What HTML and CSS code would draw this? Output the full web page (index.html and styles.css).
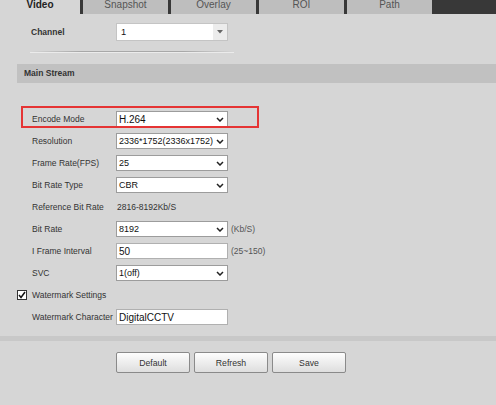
FILE: index.html
```html
<!DOCTYPE html>
<html>
<head>
<meta charset="utf-8">
<link rel="stylesheet" href="styles.css">
</head>
<body>
<div class="tabs">
  <div class="tab active">Video</div>
  <div class="tab">Snapshot</div>
  <div class="tab">Overlay</div>
  <div class="tab">ROI</div>
  <div class="tab">Path</div>
</div>

<div class="channel">
  <span class="lbl">Channel</span>
  <div class="combo"><span class="val">1</span><span class="btn"><svg width="6" height="4" viewBox="0 0 6 4"><polygon points="0,0 6,0 3,3.5" fill="#666"/></svg></span></div>
</div>
<div class="divider"></div>

<div class="section">Main Stream</div>

<div class="form">
  <div class="highlight"></div>
  <div class="row"><span class="lbl">Encode Mode</span><div class="sel"><span class="val big">H.264</span><svg class="chev" width="8" height="5" viewBox="0 0 8 5"><polyline points="1,1 4,4 7,1" fill="none" stroke="#222" stroke-width="1.5"/></svg></div></div>
  <div class="row"><span class="lbl">Resolution</span><div class="sel"><span class="val">2336*1752(2336x1752)</span><svg class="chev" width="8" height="5" viewBox="0 0 8 5"><polyline points="1,1 4,4 7,1" fill="none" stroke="#222" stroke-width="1.5"/></svg></div></div>
  <div class="row"><span class="lbl">Frame Rate(FPS)</span><div class="sel"><span class="val">25</span><svg class="chev" width="8" height="5" viewBox="0 0 8 5"><polyline points="1,1 4,4 7,1" fill="none" stroke="#222" stroke-width="1.5"/></svg></div></div>
  <div class="row"><span class="lbl">Bit Rate Type</span><div class="sel"><span class="val">CBR</span><svg class="chev" width="8" height="5" viewBox="0 0 8 5"><polyline points="1,1 4,4 7,1" fill="none" stroke="#222" stroke-width="1.5"/></svg></div></div>
  <div class="row"><span class="lbl">Reference Bit Rate</span><span class="text">2816-8192Kb/S</span></div>
  <div class="row"><span class="lbl">Bit Rate</span><div class="sel"><span class="val">8192</span><svg class="chev" width="8" height="5" viewBox="0 0 8 5"><polyline points="1,1 4,4 7,1" fill="none" stroke="#222" stroke-width="1.5"/></svg></div><span class="unit">(Kb/S)</span></div>
  <div class="row"><span class="lbl">I Frame Interval</span><div class="inp">50</div><span class="unit">(25~150)</span></div>
  <div class="row"><span class="lbl">SVC</span><div class="sel"><span class="val">1(off)</span><svg class="chev" width="8" height="5" viewBox="0 0 8 5"><polyline points="1,1 4,4 7,1" fill="none" stroke="#222" stroke-width="1.5"/></svg></div></div>
  <div class="row check-row"><span class="checkbox"><svg width="8" height="8" viewBox="0 0 8 8"><polyline points="1,4 3,6.5 7,1" fill="none" stroke="#111" stroke-width="1.5"/></svg></span><span class="check-lbl">Watermark Settings</span></div>
  <div class="row"><span class="lbl">Watermark Character</span><div class="inp">DigitalCCTV</div></div>
</div>

<div class="band"></div>

<div class="buttons">
  <button class="btn-ui">Default</button>
  <button class="btn-ui">Refresh</button>
  <button class="btn-ui">Save</button>
</div>
</body>
</html>
```

FILE: styles.css
```css
* {
  box-sizing: border-box;
  margin: 0;
  padding: 0;
}

html, body {
  width: 496px;
  height: 405px;
  overflow: hidden;
}

body {
  background: #d6d6d6;
  font-family: "Liberation Sans", Arial, sans-serif;
  color: #333;
}

.tabs {
  display: flex;
  height: 14px;
  background: #383838;
}

.tab {
  width: 85px;
  margin-left: 3px;
  background: #bebebe;
  color: #555;
  font-size: 10px;
  line-height: 10px;
  text-align: center;
}

.tab.active {
  width: 80px;
  margin-left: 0;
  background: #d6d6d6;
  color: #222;
  font-weight: bold;
}

.channel {
  display: flex;
  align-items: center;
  height: 18px;
  margin-top: 9px;
  padding-left: 31px;
}

.channel .lbl {
  width: 85px;
  font-weight: bold;
  font-size: 8.5px;
  color: #333;
}

.combo {
  width: 112px;
  height: 18px;
  background: #fff;
  border: 1px solid #c4c4c4;
  display: flex;
  align-items: center;
}

.combo .val {
  flex: 1;
  padding-left: 4px;
  font-size: 9.3px;
  color: #111;
}

.combo .btn {
  width: 14px;
  height: 16px;
  background: #ececec;
  display: flex;
  align-items: center;
  justify-content: center;
}

.divider {
  margin: 10px 0 0 30px;
  width: 204px;
  height: 1px;
  background: linear-gradient(to right, rgba(160,160,160,0), #a8a8a8 25%, #a8a8a8 75%, rgba(160,160,160,0));
  box-shadow: 0 1px 0 rgba(240,240,240,0.8);
}

.section {
  margin: 12px 0 0 17px;
  height: 19px;
  background: #c1c1c1;
  padding-left: 7px;
  line-height: 19px;
  font-size: 8.5px;
  font-weight: bold;
  color: #333;
}

.form {
  position: relative;
  margin-top: 25px;
}

.highlight {
  position: absolute;
  left: 21px;
  top: -2px;
  width: 238px;
  height: 22px;
  border: 2px solid #e53434;
}

.row {
  display: flex;
  align-items: center;
  height: 22px;
  padding-left: 32px;
}

.lbl {
  width: 84px;
  font-size: 8.5px;
  color: #333;
  white-space: nowrap;
}

.sel, .inp {
  width: 112px;
  height: 16px;
  background: #fff;
  border: 1px solid #9c9c9c;
  display: flex;
  align-items: center;
  font-size: 9px;
  color: #111;
}

.sel .val {
  flex: 1;
  padding-left: 2px;
  white-space: nowrap;
  overflow: hidden;
}

.sel .val.big {
  font-size: 10px;
}

.sel .chev {
  margin-right: 3px;
  flex: none;
}

.inp {
  padding-left: 2px;
  border-color: #b0b0b0;
  font-size: 10px;
}

.text {
  font-size: 8.5px;
  color: #333;
  padding-left: 1px;
}

.unit {
  margin-left: 3px;
  font-size: 8.5px;
  color: #555;
}

.check-row {
  padding-left: 17px;
}

.checkbox {
  width: 10px;
  height: 10px;
  border: 1px solid #333;
  background: #fff;
  display: flex;
  align-items: center;
  justify-content: center;
  margin-right: 5px;
}

.check-lbl {
  font-size: 8.5px;
  color: #333;
}

.band {
  margin-top: 8px;
  height: 5px;
  background: #c8c8c8;
}

.buttons {
  display: flex;
  gap: 4px;
  margin-top: 11px;
  padding-left: 116px;
}

.btn-ui {
  width: 74px;
  height: 21px;
  border: 1px solid #8a8a8a;
  border-radius: 2px;
  background: linear-gradient(#fdfdfd, #dedede);
  font-family: "Liberation Sans", Arial, sans-serif;
  font-size: 8.7px;
  color: #333;
}
```
